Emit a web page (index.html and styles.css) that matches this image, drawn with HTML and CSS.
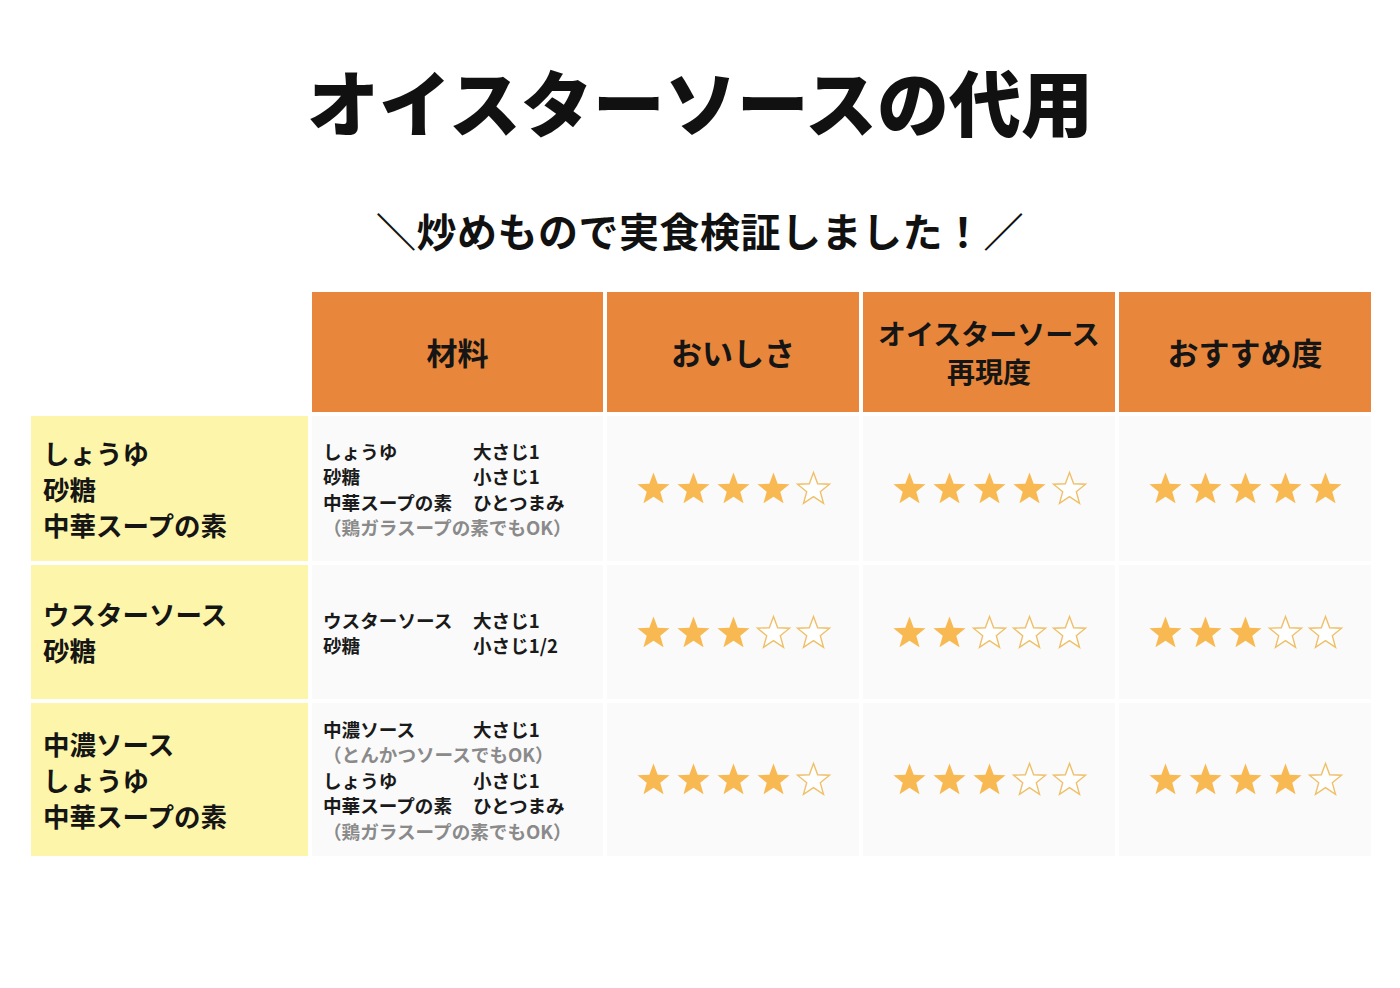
FILE: index.html
```html
<!DOCTYPE html>
<html lang="ja">
<head>
<meta charset="utf-8">
<title>オイスターソースの代用</title>
<link rel="stylesheet" href="styles.css">
</head>
<body>
<svg width="0" height="0" class="defs">
  <defs>
    <symbol id="s" viewBox="0 0 24 24"><polygon points="12,1.6 14.7,8.9 22.4,9.2 16.4,14.1 18.5,21.6 12,17.3 5.5,21.6 7.6,14.1 1.6,9.2 9.3,8.9"/></symbol>
  </defs>
</svg>
<main class="page">
  <h1 class="title">オイスターソースの代用</h1>
  <p class="subtitle">＼炒めもので実食検証しました！／</p>
  <div class="table">
    <div class="blank"></div>
    <div class="head">材料</div>
    <div class="head">おいしさ</div>
    <div class="head head-small">オイスターソース<br>再現度</div>
    <div class="head">おすすめ度</div>

    <div class="label">しょうゆ<br>砂糖<br>中華スープの素</div>
    <div class="cell ing">
      <div class="ing-grid">
        <span>しょうゆ</span><span>大さじ1</span>
        <span>砂糖</span><span>小さじ1</span>
        <span>中華スープの素</span><span>ひとつまみ</span>
        <span class="note">（鶏ガラスープの素でもOK）</span>
      </div>
    </div>
    <div class="cell stars"><svg class="f"><use href="#s"/></svg><svg class="f"><use href="#s"/></svg><svg class="f"><use href="#s"/></svg><svg class="f"><use href="#s"/></svg><svg class="e"><use href="#s"/></svg></div>
    <div class="cell stars"><svg class="f"><use href="#s"/></svg><svg class="f"><use href="#s"/></svg><svg class="f"><use href="#s"/></svg><svg class="f"><use href="#s"/></svg><svg class="e"><use href="#s"/></svg></div>
    <div class="cell stars"><svg class="f"><use href="#s"/></svg><svg class="f"><use href="#s"/></svg><svg class="f"><use href="#s"/></svg><svg class="f"><use href="#s"/></svg><svg class="f"><use href="#s"/></svg></div>

    <div class="label">ウスターソース<br>砂糖</div>
    <div class="cell ing">
      <div class="ing-grid">
        <span>ウスターソース</span><span>大さじ1</span>
        <span>砂糖</span><span>小さじ1/2</span>
      </div>
    </div>
    <div class="cell stars"><svg class="f"><use href="#s"/></svg><svg class="f"><use href="#s"/></svg><svg class="f"><use href="#s"/></svg><svg class="e"><use href="#s"/></svg><svg class="e"><use href="#s"/></svg></div>
    <div class="cell stars"><svg class="f"><use href="#s"/></svg><svg class="f"><use href="#s"/></svg><svg class="e"><use href="#s"/></svg><svg class="e"><use href="#s"/></svg><svg class="e"><use href="#s"/></svg></div>
    <div class="cell stars"><svg class="f"><use href="#s"/></svg><svg class="f"><use href="#s"/></svg><svg class="f"><use href="#s"/></svg><svg class="e"><use href="#s"/></svg><svg class="e"><use href="#s"/></svg></div>

    <div class="label">中濃ソース<br>しょうゆ<br>中華スープの素</div>
    <div class="cell ing">
      <div class="ing-grid">
        <span>中濃ソース</span><span>大さじ1</span>
        <span class="note">（とんかつソースでもOK）</span>
        <span>しょうゆ</span><span>小さじ1</span>
        <span>中華スープの素</span><span>ひとつまみ</span>
        <span class="note">（鶏ガラスープの素でもOK）</span>
      </div>
    </div>
    <div class="cell stars"><svg class="f"><use href="#s"/></svg><svg class="f"><use href="#s"/></svg><svg class="f"><use href="#s"/></svg><svg class="f"><use href="#s"/></svg><svg class="e"><use href="#s"/></svg></div>
    <div class="cell stars"><svg class="f"><use href="#s"/></svg><svg class="f"><use href="#s"/></svg><svg class="f"><use href="#s"/></svg><svg class="e"><use href="#s"/></svg><svg class="e"><use href="#s"/></svg></div>
    <div class="cell stars"><svg class="f"><use href="#s"/></svg><svg class="f"><use href="#s"/></svg><svg class="f"><use href="#s"/></svg><svg class="f"><use href="#s"/></svg><svg class="e"><use href="#s"/></svg></div>
  </div>
</main>
</body>
</html>
```

FILE: styles.css
```css
html, body {
  margin: 0;
  padding: 0;
  background: #ffffff;
}
body {
  font-family: "Noto Sans CJK JP", "Noto Sans", sans-serif;
  color: #111111;
}
.defs {
  position: absolute;
  width: 0;
  height: 0;
}
.page {
  width: 1400px;
  height: 988px;
  box-sizing: border-box;
  padding-top: 53px;
}
.title {
  margin: 0;
  text-align: center;
  font-size: 72px;
  font-weight: 900;
  line-height: 94px;
}
.subtitle {
  margin: 0;
  margin-top: 58px;
  text-align: center;
  font-size: 40px;
  font-weight: 700;
  line-height: 50px;
  letter-spacing: 0.5px;
}
.table {
  margin-top: 37px;
  margin-left: 31px;
  display: grid;
  grid-template-columns: 277px 291px 252px 252px 252px;
  grid-template-rows: 120px 145px 134px 153px;
  column-gap: 4px;
  row-gap: 4px;
}
.head {
  background: #e8873c;
  display: flex;
  align-items: center;
  justify-content: center;
  text-align: center;
  font-size: 31px;
  font-weight: 700;
  line-height: 38px;
  color: #151515;
}
.head-small {
  font-size: 28px;
}
.label {
  background: #fdf5a9;
  display: flex;
  align-items: center;
  padding-left: 12px;
  font-size: 26.5px;
  font-weight: 700;
  line-height: 36px;
  color: #151515;
}
.cell {
  background: #fafafa;
  display: flex;
  align-items: center;
}
.ing {
  padding-left: 11px;
}
.ing-grid {
  display: grid;
  grid-template-columns: 150px auto;
  font-size: 18.6px;
  font-weight: 700;
  line-height: 25.4px;
  color: #1a1a1a;
}
.note {
  grid-column: 1 / 3;
  color: #8a8a8a;
}
.stars {
  justify-content: center;
  gap: 3px;
}
.stars svg {
  width: 37px;
  height: 37px;
}
.stars .f {
  fill: #f8b952;
}
.stars .e {
  fill: #ffffff;
  stroke: #efc06a;
  stroke-width: 0.9;
}
```
